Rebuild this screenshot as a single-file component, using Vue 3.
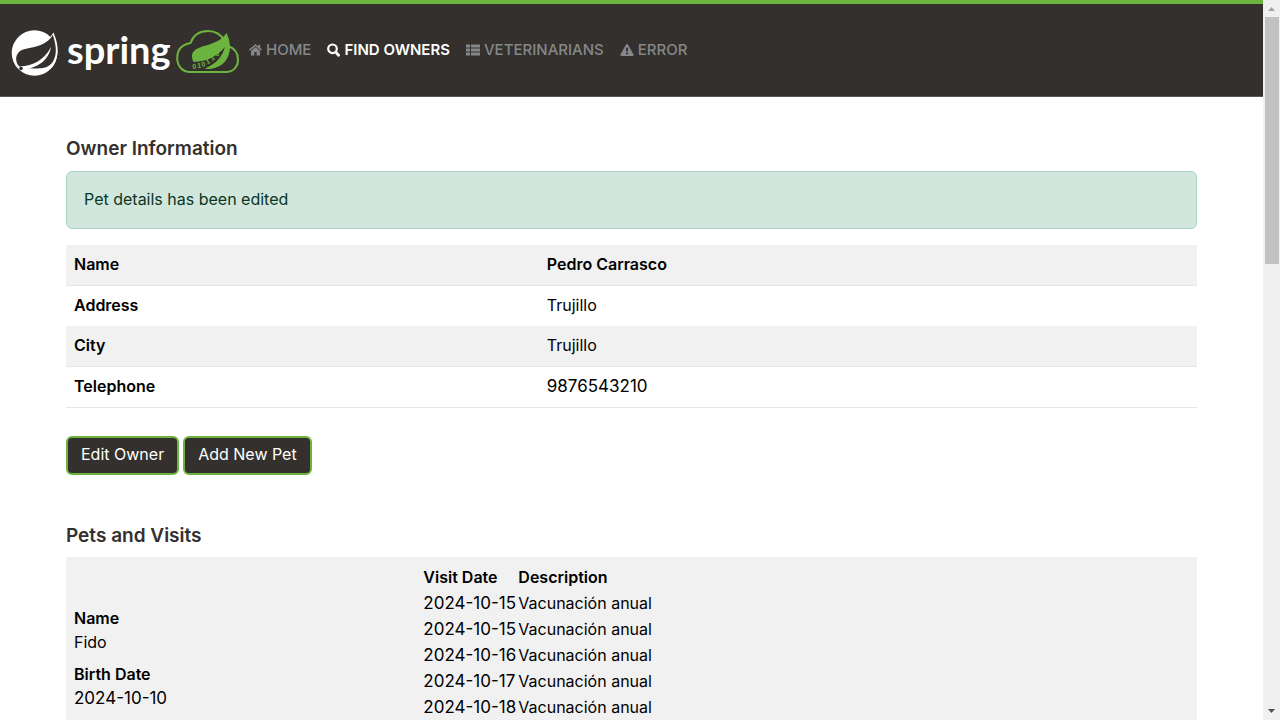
<script setup>
const owner = [
  { label: 'Name', value: 'Pedro Carrasco', strong: true },
  { label: 'Address', value: 'Trujillo' },
  { label: 'City', value: 'Trujillo' },
  { label: 'Telephone', value: '9876543210', numeric: true },
]
const visits = ['2024-10-15', '2024-10-15', '2024-10-16', '2024-10-17', '2024-10-18']
</script>

<template>
  <div class="window">
    <div class="page">
      <header class="navbar">
        <a class="brand" href="#" aria-label="Spring PetClinic">
          <svg width="230" height="50" viewBox="0 0 230 50">
            <circle cx="22.500" cy="24" r="22.800" fill="#fff" />
            <path d="M41.500 3.500C45.500 13 48 24 42.500 34C38 41.500 31 43 24 42L30 20Z" fill="#fff" />
            <path d="M40.800 6C43.500 14 46 24 41 32.500C36 40.500 27 39.500 18 39.200C13 39 9 39.500 6 36C3.500 32 3.500 27 6.500 23.500C13 16.500 31 21.500 40.800 6Z" fill="#34302d" />
            <path d="M8 37.500C21 36.500 32 31.500 39 18C37 31 25 40 11 39.800Z" fill="#fff" />
            <circle cx="9" cy="39.500" r="1.800" fill="#34302d" />
            <text x="55" y="35" class="brand-text">spring</text>
            <path d="M213 12C209 5.500 203 2 196 2C187 2 181 7 178.500 14C170 15.500 165.200 21 165.200 29C165.200 37 170.500 43 178 43H214C221.500 43 226 37.500 226 31C226 24 222.500 19 216 17" fill="none" stroke="#6db33f" stroke-width="2" />
            <path d="M214.500 4C219 13 219.500 24 213.500 32C208 39 200 40 190 39.500C185 39 180.500 34 180 28C179.500 14 204 20 214.500 4Z" fill="#6db33f" />
            <path d="M179 33C192 33 204 29 213 18C210 28 204 35 192 40L180 41Z" fill="#34302d" />
            <text class="bits" x="180.500 185.500 190 195 200 205" y="40 39 38 35.500 32 28" rotate="-5 -8 -14 -24 -34 -42">010110</text>
            <path d="M193 39.500C204 37 211 30 216 18C216.500 29 209 40 196 40Z" fill="#6db33f" />
          </svg>
        </a>
        <nav class="nav">
          <a href="#" class="nav-link">
            <svg width="13" height="12" viewBox="0 0 13 12" fill="currentColor"><path d="M6.500 0 0 5.600l1 1.100 5.500-4.700 5.500 4.700 1-1.100-1.800-1.600V.8H9.300v1.600ZM6.500 3.100 2 6.900V11.500h3.400V8h2.200v3.500H11V6.900Z" /></svg>
            <span>HOME</span>
          </a>
          <a href="#" class="nav-link active">
            <svg width="13" height="14" viewBox="0 0 13 14" fill="none" stroke="currentColor"><circle cx="5.500" cy="5.800" r="4.300" stroke-width="2.200" /><path d="m8.800 9.200 2.800 3" stroke-width="2.800" stroke-linecap="round" /></svg>
            <span>FIND OWNERS</span>
          </a>
          <a href="#" class="nav-link">
            <svg width="14" height="12" viewBox="0 0 14 12" fill="currentColor"><path d="M0 .5h4v3H0zM5 .5h9v3H5zM0 4.500h4v3H0zM5 4.500h9v3H5zM0 8.500h4v3H0zM5 8.500h9v3H5z" /></svg>
            <span>VETERINARIANS</span>
          </a>
          <a href="#" class="nav-link">
            <svg width="14" height="14" viewBox="0 0 15 14" fill="currentColor"><path fill-rule="evenodd" d="M7.500.5c.5 0 .8.200 1 .6l6 10.800c.4.800 0 1.600-1 1.600h-12c-1 0-1.400-.8-1-1.600l6-10.800c.2-.4.500-.6 1-.6ZM6.300 4.500l.3 4.200h1.800l.3-4.200ZM6.500 9.700v1.900h2V9.700Z" /></svg>
            <span>ERROR</span>
          </a>
        </nav>
      </header>

      <main class="content">
        <h2>Owner Information</h2>
        <div class="alert" role="status">Pet details has been edited</div>

        <table class="striped owner">
          <tbody>
            <tr v-for="row in owner" :key="row.label">
              <th scope="row">{{ row.label }}</th>
              <td :class="{ numeric: row.numeric }"><b v-if="row.strong">{{ row.value }}</b><template v-else>{{ row.value }}</template></td>
            </tr>
          </tbody>
        </table>

        <div class="actions">
          <a href="#" class="btn">Edit Owner</a>
          <a href="#" class="btn">Add New Pet</a>
        </div>

        <h2>Pets and Visits</h2>
        <table class="striped pets">
          <tbody>
            <tr>
              <td>
                <dl>
                  <dt>Name</dt>
                  <dd>Fido</dd>
                  <dt>Birth Date</dt>
                  <dd class="numeric">2024-10-10</dd>
                </dl>
              </td>
              <td>
                <table class="visits">
                  <thead>
                    <tr><th scope="col">Visit Date</th><th scope="col">Description</th></tr>
                  </thead>
                  <tbody>
                    <tr v-for="(date, i) in visits" :key="i">
                      <td class="numeric">{{ date }}</td>
                      <td>Vacunación anual</td>
                    </tr>
                  </tbody>
                </table>
              </td>
            </tr>
          </tbody>
        </table>
      </main>
    </div>

    <div class="scrollbar" aria-hidden="true">
      <svg class="arrow" width="17" height="16" viewBox="0 0 17 16"><path d="M5 11h7L8.500 7Z" fill="#a3a3a3" /></svg>
      <div class="track"><div class="thumb"></div></div>
      <svg class="arrow" width="17" height="16" viewBox="0 0 17 16"><path d="M5 5h7L8.500 9Z" fill="#505050" /></svg>
    </div>
  </div>
</template>

<style>
body {
  margin: 0;
  background: #fff;
}
</style>

<style scoped>
.window {
  display: flex;
  height: 100vh;
  font: 400 16px/24px Inter, "Noto Sans", sans-serif;
  color: #000;
}
.page {
  flex: 1;
  min-width: 0;
  overflow-y: auto;
  scrollbar-width: none;
}
.navbar {
  display: flex;
  align-items: center;
  box-sizing: border-box;
  padding: 24px 12px 16px;
  border-top: 4px solid #6db33f;
  border-bottom: 1px solid #5a5653;
  background: #34302d;
}
.brand {
  display: block;
  padding: 1px 0;
}
.brand svg {
  display: block;
  overflow: visible;
}
.brand-text {
  font: 700 38px Lato, sans-serif;
  fill: #fff;
}
.bits {
  font: 700 7px "Liberation Sans", sans-serif;
  fill: #6db33f;
}
.nav {
  display: flex;
  gap: 16px;
  margin-left: 7px;
  padding-bottom: 8px;
}
.nav-link {
  display: flex;
  align-items: center;
  gap: 4px;
  font-size: 15px;
  font-weight: 500;
  color: #85888b;
  text-decoration: none;
}
.nav-link.active {
  font-weight: 600;
  color: #fff;
}
.content {
  padding: 40px 66px 0;
}
h2 {
  margin: 0 0 9px;
  font-size: 19px;
  line-height: 24px;
  font-weight: 600;
  color: #34302d;
}
.alert {
  padding: 15px 17px 17px;
  margin: 10px 0 16px;
  border: 1px solid #a9d4c1;
  border-radius: 6px;
  background: #d1e7dd;
  color: #0a3622;
}
table {
  border-collapse: collapse;
}
th,
b {
  font-weight: 600;
  text-align: left;
}
.striped {
  width: 100%;
  table-layout: fixed;
}
.striped > tbody > tr > th,
.striped > tbody > tr > td {
  box-sizing: border-box;
  padding: 7px 8px 9px;
  border-bottom: 1px solid #e6e6e6;
  vertical-align: top;
}
.striped > tbody > tr:nth-child(odd) {
  background: #f1f1f1;
}
.owner > tbody > tr:nth-child(2) > * {
  border-bottom: 0;
}
.owner th {
  width: 41.8%;
}
.actions {
  display: flex;
  gap: 4px;
  margin: 28px 0 49px;
}
.btn {
  padding: 4px 13px 7px;
  border: 2px solid #6db33f;
  border-radius: 6px;
  background: #34302d;
  color: #fff;
  text-decoration: none;
}
.striped.pets > tbody > tr > td {
  padding-top: 8px;
}
.pets > tbody > tr > td:first-child {
  width: 30.8%;
}
.pets dl {
  margin: 41px 0 0;
}
.pets dt {
  font-weight: 600;
}
.pets dd {
  margin: 0 0 8px;
}
.numeric {
  font-size: 17px;
}
.visits th,
.visits td {
  padding: 0 1px 2px;
}
.visits th:first-child {
  width: 93px;
}
.scrollbar {
  flex: none;
  display: flex;
  flex-direction: column;
  width: 17px;
  background: #f0f0f0;
}
.arrow {
  display: block;
}
.track {
  flex: 1;
  padding: 1px 1px 0 2px;
}
.thumb {
  height: 36%;
  background: #c1c1c1;
}
</style>
